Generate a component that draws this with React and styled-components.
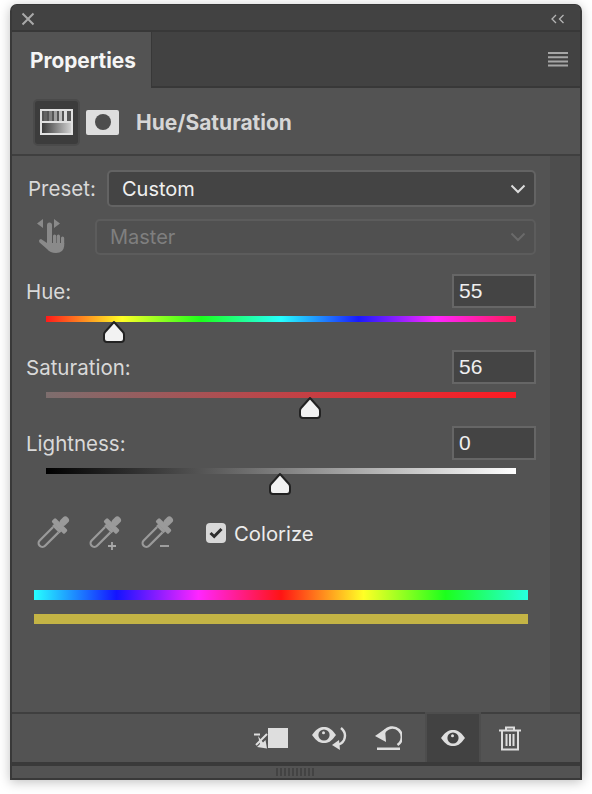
import styled, { createGlobalStyle } from "styled-components";

const GlobalStyle = createGlobalStyle`
  html, body {
    margin: 0;
    padding: 0;
    background: #ffffff;
  }
  body {
    font-family: Inter, "Liberation Sans", sans-serif;
  }
`;

const Page = styled.div`
  width: 592px;
  height: 794px;
  padding: 4px 10px 0;
  box-sizing: border-box;
`;

const Panel = styled.div`
  width: 572px;
  height: 776px;
  box-sizing: border-box;
  display: flex;
  flex-direction: column;
  background: #535353;
  border: 2px solid #393939;
  border-top-width: 1px;
  border-radius: 7px 7px 0 0;
  box-shadow: 0 2px 12px rgba(0, 0, 0, 0.25);
  overflow: hidden;
`;

const TitleBar = styled.div`
  height: 27px;
  flex: none;
  display: flex;
  align-items: center;
  justify-content: space-between;
  padding: 3px 15px 0 9px;
  box-sizing: border-box;
  background: #424242;
  border-bottom: 2px solid #383838;
`;

const TabRow = styled.div`
  height: 56px;
  flex: none;
  display: flex;
  align-items: stretch;
  justify-content: space-between;
  background: #424242;
  border-bottom: 2px solid #383838;
  box-sizing: border-box;
`;

const Tab = styled.div`
  width: 140px;
  margin-bottom: -2px;
  box-sizing: border-box;
  padding: 0 0 0 18px;
  display: flex;
  align-items: center;
  background: #535353;
  border-right: 1px solid #383838;
  color: #f5f5f5;
  font-size: 20.8px;
  font-weight: 700;
`;

const MenuButton = styled.div`
  display: flex;
  align-items: center;
  padding-right: 12px;
`;

const Header = styled.div`
  height: 68px;
  flex: none;
  display: flex;
  align-items: center;
  padding: 2px 0 0 21px;
  box-sizing: border-box;
  border-bottom: 2px solid #3f3f3f;
`;

const HeaderIcon = styled.div`
  width: 47px;
  height: 47px;
  box-sizing: border-box;
  display: flex;
  align-items: center;
  justify-content: center;
  background: #3c3c3c;
  border: 2px solid #4a4a4a;
  border-radius: 5px;
  margin-right: 6px;
`;

const MaskIcon = styled.div`
  width: 33px;
  height: 25px;
  border-radius: 2px;
  background: #dedede;
  display: flex;
  align-items: center;
  justify-content: center;
  &::after {
    content: "";
    width: 16px;
    height: 16px;
    border-radius: 50%;
    background: #4e4e4e;
  }
`;

const HeaderTitle = styled.div`
  margin-left: 17px;
  color: #d6d6d6;
  font-size: 21px;
  font-weight: 700;
`;

const Content = styled.div`
  flex: 1;
  display: flex;
  min-height: 0;
`;

const Main = styled.div`
  width: 538px;
  flex: none;
  box-sizing: border-box;
  padding: 14px 14px 0;
`;

const ScrollTrack = styled.div`
  flex: 1;
  background: #4d4d4d;
`;

const SelectRow = styled.div`
  display: flex;
  align-items: flex-start;
  height: 37px;
  margin-bottom: 12px;
`;

const PresetLabel = styled.div`
  width: 79px;
  margin-left: 2px;
  line-height: 37px;
  color: #d9d9d9;
  font-size: 20.5px;
`;

const HandSlot = styled.div`
  width: 69px;
  display: flex;
  padding-left: 11px;
  box-sizing: border-box;
`;

const Select = styled.div`
  flex: 1;
  height: ${(p) => (p.$disabled ? "36px" : "37px")};
  box-sizing: border-box;
  display: flex;
  align-items: center;
  justify-content: space-between;
  padding: 0 8px 0 13px;
  border: 2px solid ${(p) => (p.$disabled ? "#5c5c5c" : "#636363")};
  border-radius: 5px;
  background: ${(p) => (p.$disabled ? "#505050" : "#444444")};
  color: ${(p) => (p.$disabled ? "#7f7f7f" : "#f0f0f0")};
  font-size: 20px;
`;

const SliderGroup = styled.div`
  margin-top: 18px;
  display: flex;
  flex-direction: column;
  gap: 28px;
`;

const Slider = styled.div`
  display: flex;
  flex-direction: column;
`;

const SliderHead = styled.div`
  display: flex;
  align-items: center;
  justify-content: space-between;
  height: 34px;
`;

const SliderLabel = styled.div`
  color: #d9d9d9;
  font-size: 20.5px;
`;

const NumberBox = styled.div`
  width: 84px;
  height: 34px;
  box-sizing: border-box;
  display: flex;
  align-items: center;
  padding-left: 5px;
  border: 2px solid #666666;
  background: #444444;
  color: #efefef;
  font-size: 21px;
  font-family: "Liberation Sans", sans-serif;
`;

const Track = styled.div`
  position: relative;
  height: 6px;
  margin: 8px 20px 0;
  width: 470px;
  background: ${(p) => p.$fill};
`;

const ThumbWrap = styled.svg`
  position: absolute;
  top: 4px;
  margin-left: -12px;
  display: block;
`;

const ToolRow = styled.div`
  display: flex;
  align-items: center;
  margin-top: 42px;
  height: 34px;
  padding-left: 10px;
`;

const Dropper = styled.div`
  width: 52px;
  display: flex;
`;

const CheckLabel = styled.div`
  display: flex;
  align-items: center;
  margin-left: 14px;
  gap: 8px;
  color: #ececec;
  font-size: 20.3px;
`;

const CheckBox = styled.div`
  width: 20px;
  height: 20px;
  border-radius: 4px;
  background: #d8d8d8;
  display: flex;
  align-items: center;
  justify-content: center;
`;

const Bars = styled.div`
  margin: 40px 8px 0;
  width: 494px;
  display: flex;
  flex-direction: column;
  gap: 14px;
`;

const ColorBar = styled.div`
  height: 10px;
  background: ${(p) => p.$fill};
`;

const Footer = styled.div`
  height: 54px;
  flex: none;
  display: flex;
  align-items: stretch;
  box-sizing: border-box;
  padding-left: 241px;
  border-top: 2px solid #3f3f3f;
  border-bottom: 4px solid #3a3a3a;
`;

const FooterButton = styled.div`
  width: ${(p) => p.$w}px;
  display: flex;
  align-items: center;
  justify-content: flex-start;
  box-sizing: border-box;
`;

const FooterSlot = styled.div`
  width: ${(p) => p.$w}px;
  display: flex;
  align-items: center;
  justify-content: center;
  box-sizing: border-box;
  ${(p) =>
    p.$active &&
    `
    background: #424242;
    border: 2px solid #4d4d4d;
    border-bottom: none;
    margin-top: -2px;
  `}
`;

const GripBar = styled.div`
  height: 12px;
  flex: none;
  display: flex;
  align-items: center;
  justify-content: center;
  gap: 2px;
  padding-right: 2px;
`;

const GripTick = styled.div`
  width: 2px;
  height: 8px;
  background: #434343;
`;

const HUE =
  "linear-gradient(90deg,#ff1a1a 0%,#ffff26 16.2%,#1cff1c 33%,#26ffff 50%,#1a1aff 66.5%,#ff26ff 83%,#ff1a5a 100%)";
const SAT = "linear-gradient(90deg,#7d6e6e 0%,#ff1a22 100%)";
const LIGHT = "linear-gradient(90deg,#000000 0%,#808080 50%,#ffffff 100%)";
const SPECTRUM =
  "linear-gradient(90deg,#26ffff 0%,#1414ff 16.7%,#ff26ff 33.3%,#ff1414 50%,#ffff26 66.7%,#1cff1c 83.3%,#26ffe0 100%)";

const sliders = [
  { label: "Hue:", value: "55", fill: HUE, pos: 68 },
  { label: "Saturation:", value: "56", fill: SAT, pos: 264 },
  { label: "Lightness:", value: "0", fill: LIGHT, pos: 234 },
];

const Thumb = ({ pos }) => (
  <ThumbWrap width="24" height="24" viewBox="0 0 24 24" style={{ left: pos }}>
    <path
      d="M12 2 L21 12 Q22 13 22 15 V19 Q22 22 19 22 H5 Q2 22 2 19 V15 Q2 13 3 12 Z"
      fill="#f2f2f2"
      stroke="#222"
      strokeWidth="2"
      strokeLinejoin="round"
    />
  </ThumbWrap>
);

const Chevron = ({ color }) => (
  <svg width="16" height="10" viewBox="0 0 16 10">
    <path d="M1.5 1.5 L8 8 L14.5 1.5" fill="none" stroke={color} strokeWidth="2" />
  </svg>
);

const Eye = ({ bg, x = 0, y = 0 }) => (
  <g transform={`translate(${x} ${y})`}>
    <path
      d="M0 9 C5 2 8 1 12 1 C16 1 19 2 24 9 C19 16 16 17 12 17 C8 17 5 16 0 9 Z"
      fill="#dedede"
    />
    <circle cx="12" cy="9" r="5.6" fill={bg} />
    <circle cx="11.5" cy="6.8" r="1.5" fill="#dedede" />
  </g>
);

// drawn upright around the origin, then turned so the bulb points up-right
const DropperIcon = ({ mark }) => (
  <svg width="34" height="34" viewBox="0 0 34 34">
    <g transform="translate(17 16.5) rotate(45)">
      <rect x="-3.6" y="-21" width="7.2" height="10" rx="3.4" fill="#9a9a9a" />
      <rect x="-9" y="-12" width="18" height="5.5" rx="1.5" fill="#9a9a9a" />
      <rect x="-5.2" y="-7" width="10.4" height="3" fill="#9a9a9a" />
      <path
        d="M-3.8 -4 V15 A3.8 3.8 0 0 0 3.8 15 V-4"
        fill="none"
        stroke="#9a9a9a"
        strokeWidth="2.2"
      />
    </g>
    {mark === "plus" && <path d="M24 26 V34 M20 30 H28" stroke="#a8a8a8" strokeWidth="1.8" />}
    {mark === "minus" && <path d="M20 30 H29" stroke="#a8a8a8" strokeWidth="1.8" />}
  </svg>
);

export default function App() {
  return (
    <Page>
      <GlobalStyle />
      <Panel>
        <TitleBar>
          <svg width="14" height="14" viewBox="0 0 14 14">
            <path d="M1.5 1.5 L12.5 12.5 M12.5 1.5 L1.5 12.5" stroke="#a9a9a9" strokeWidth="2" />
          </svg>
          <svg width="14" height="10" viewBox="0 0 14 10">
            <path d="M5 1 L1 5 L5 9 M12.5 1 L8.5 5 L12.5 9" fill="none" stroke="#b5b5b5" strokeWidth="1.3" />
          </svg>
        </TitleBar>
        <TabRow>
          <Tab>Properties</Tab>
          <MenuButton>
            <svg width="20" height="15" viewBox="0 0 20 15">
              <path d="M0 1 H20 M0 5.3 H20 M0 9.5 H20 M0 13.5 H20" stroke="#a6a6a6" strokeWidth="2" />
            </svg>
          </MenuButton>
        </TabRow>
        <Header>
          <HeaderIcon>
            <svg width="33" height="26" viewBox="0 0 33 26">
              <defs>
                <linearGradient id="gradBand" x1="0" x2="1" y1="0" y2="0">
                  <stop offset="0" stopColor="#3a3a3a" />
                  <stop offset="1" stopColor="#d0d0d0" />
                </linearGradient>
              </defs>
              <rect x="0" y="0" width="33" height="26" fill="#e0e0e0" />
              <rect x="2" y="2" width="29" height="10" fill="#555" />
              {[4, 9, 14, 19, 24].map((x, i) => (
                <rect key={x} x={x} y="2" width="3" height="10" fill={`rgb(${100 + i * 30},${100 + i * 30},${100 + i * 30})`} />
              ))}
              <rect x="2" y="14" width="29" height="10" fill="url(#gradBand)" />
            </svg>
          </HeaderIcon>
          <MaskIcon />
          <HeaderTitle>Hue/Saturation</HeaderTitle>
        </Header>
        <Content>
          <Main>
            <SelectRow>
              <PresetLabel>Preset:</PresetLabel>
              <Select>
                Custom
                <Chevron color="#dcdcdc" />
              </Select>
            </SelectRow>
            <SelectRow>
              <HandSlot>
                <svg width="30" height="35" viewBox="0 0 30 35">
                  <path d="M0 4.5 L6 0 V9 Z M17 0 L23 4.5 L17 9 Z" fill="#8a8a8a" />
                  <path d="M12.5 6 V25" stroke="#8a8a8a" strokeWidth="5" strokeLinecap="round" />
                  <path
                    d="M17.6 17 V25 M21.4 17 V25 M25.6 19 V25"
                    stroke="#8a8a8a"
                    strokeWidth="3.2"
                    strokeLinecap="round"
                  />
                  <path
                    d="M10 24 H27.2 V27 Q26.5 34 19 34 Q13 34 10 30 L2.5 23.5 Q1 20.5 4 20 L10 24 Z"
                    fill="#8a8a8a"
                  />
                </svg>
              </HandSlot>
              <Select $disabled>
                Master
                <Chevron color="#6a6a6a" />
              </Select>
            </SelectRow>
            <SliderGroup>
              {sliders.map((s) => (
                <Slider key={s.label}>
                  <SliderHead>
                    <SliderLabel>{s.label}</SliderLabel>
                    <NumberBox>{s.value}</NumberBox>
                  </SliderHead>
                  <Track $fill={s.fill}>
                    <Thumb pos={s.pos} />
                  </Track>
                </Slider>
              ))}
            </SliderGroup>
            <ToolRow>
              <Dropper>
                <DropperIcon />
              </Dropper>
              <Dropper>
                <DropperIcon mark="plus" />
              </Dropper>
              <Dropper>
                <DropperIcon mark="minus" />
              </Dropper>
              <CheckLabel>
                <CheckBox>
                  <svg width="14" height="12" viewBox="0 0 14 12">
                    <path d="M1.5 6 L5.2 9.5 L12.5 2" fill="none" stroke="#2e2e2e" strokeWidth="3" />
                  </svg>
                </CheckBox>
                Colorize
              </CheckLabel>
            </ToolRow>
            <Bars>
              <ColorBar $fill={SPECTRUM} />
              <ColorBar $fill="#c4b445" />
            </Bars>
          </Main>
          <ScrollTrack />
        </Content>
        <Footer>
          <FooterButton $w={59}>
            <svg width="36" height="22" viewBox="0 0 36 22">
              <rect x="15" y="1" width="20" height="20" fill="#dedede" />
              <path d="M1 7.5 H7 M14 7 L3 18" fill="none" stroke="#dedede" strokeWidth="2" />
              <path d="M5 9 L7 17 L4 20 L14 21.5 L12.5 13 L10 15.5 Z" fill="#dedede" />
            </svg>
          </FooterButton>
          <FooterButton $w={63}>
            <svg width="36" height="26" viewBox="0 0 36 26">
              <Eye bg="#535353" x="0" y="1" />
              <path d="M29 3 Q35 8 32 15 Q30 19 25 20" fill="none" stroke="#dedede" strokeWidth="2.4" />
              <path d="M20 20 L27 15 L28 25 Z" fill="#dedede" />
            </svg>
          </FooterButton>
          <FooterButton $w={50}>
            <svg width="27" height="25" viewBox="0 0 27 25">
              <path d="M9 6.5 A9.5 9.5 0 1 1 22.5 19" fill="none" stroke="#dedede" strokeWidth="2.6" />
              <path d="M0 10 L10 3 L11 16 Z" fill="#dedede" />
              <rect x="2" y="21.5" width="23" height="2.5" fill="#dedede" />
            </svg>
          </FooterButton>
          <FooterSlot $w={56} $active>
            <svg width="24" height="18" viewBox="0 0 24 18">
              <Eye bg="#424242" />
            </svg>
          </FooterSlot>
          <FooterSlot $w={58}>
            <svg width="22" height="25" viewBox="0 0 22 25">
              <path d="M7 4 V1.5 H15 V4 M0 4.5 H22" fill="none" stroke="#dedede" strokeWidth="2" />
              <path d="M3 5 V23.5 H19 V5 M7.5 8 V20 M11 8 V20 M14.5 8 V20" fill="none" stroke="#dedede" strokeWidth="2" />
            </svg>
          </FooterSlot>
        </Footer>
        <GripBar>
          {Array.from({ length: 10 }).map((_, i) => (
            <GripTick key={i} />
          ))}
        </GripBar>
      </Panel>
    </Page>
  );
}
